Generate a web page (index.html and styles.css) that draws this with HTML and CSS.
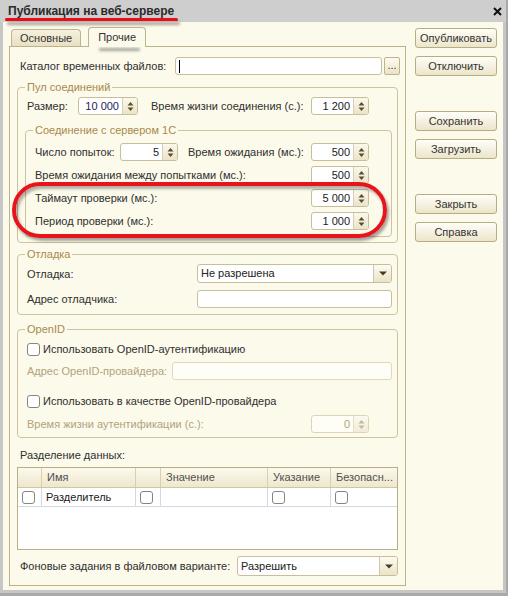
FILE: index.html
```html
<!DOCTYPE html>
<html lang="ru">
<head>
<meta charset="utf-8">
<title>Публикация на веб-сервере</title>
<link rel="stylesheet" href="styles.css">
</head>
<body>
<div class="window">
  <div class="titlebar">
    <span class="title">Публикация на веб-сервере</span>
    <svg class="close" width="9" height="9" viewBox="0 0 9 9"><path d="M1 1L8 8M8 1L1 8" stroke="#111" stroke-width="2"/></svg>
  </div>
  <div class="body">
    <div class="main">
      <div class="tabs">
        <div class="tab">Основные</div>
        <div class="tab active">Прочие</div>
      </div>
      <div class="panel">
        <div class="row catalog">
          <span class="lbl w155">Каталог временных файлов:</span>
          <div class="input grow"><span class="caret"></span></div>
          <div class="dots">...</div>
        </div>

        <fieldset class="group pool">
          <legend>Пул соединений</legend>
          <div class="row">
            <span class="lbl w51">Размер:</span>
            <div class="spin w60"><span class="val focus">10 000</span><span class="arrows"><svg width="7" height="11" viewBox="0 0 7 11"><path d="M0.5 4.5L3.5 1L6.5 4.5Z M0.5 6.5L3.5 10L6.5 6.5Z" fill="#5c4e2a"/></svg></span></div>
            <span class="lbl w160 ml13">Время жизни соединения (с.):</span>
            <div class="spin"><span class="val">1 200</span><span class="arrows"><svg width="7" height="11" viewBox="0 0 7 11"><path d="M0.5 4.5L3.5 1L6.5 4.5Z M0.5 6.5L3.5 10L6.5 6.5Z" fill="#5c4e2a"/></svg></span></div>
          </div>

          <fieldset class="group inner">
            <legend>Соединение с сервером 1С</legend>
            <div class="rows">
              <div class="row">
                <span class="lbl w85">Число попыток:</span>
                <div class="spin"><span class="val">5</span><span class="arrows"><svg width="7" height="11" viewBox="0 0 7 11"><path d="M0.5 4.5L3.5 1L6.5 4.5Z M0.5 6.5L3.5 10L6.5 6.5Z" fill="#5c4e2a"/></svg></span></div>
                <span class="lbl w123 ml10">Время ожидания (мс.):</span>
                <div class="spin"><span class="val">500</span><span class="arrows"><svg width="7" height="11" viewBox="0 0 7 11"><path d="M0.5 4.5L3.5 1L6.5 4.5Z M0.5 6.5L3.5 10L6.5 6.5Z" fill="#5c4e2a"/></svg></span></div>
              </div>
              <div class="row">
                <span class="lbl w276">Время ожидания между попытками (мс.):</span>
                <div class="spin"><span class="val">500</span><span class="arrows"><svg width="7" height="11" viewBox="0 0 7 11"><path d="M0.5 4.5L3.5 1L6.5 4.5Z M0.5 6.5L3.5 10L6.5 6.5Z" fill="#5c4e2a"/></svg></span></div>
              </div>
              <div class="row">
                <span class="lbl w276">Таймаут проверки (мс.):</span>
                <div class="spin"><span class="val">5 000</span><span class="arrows"><svg width="7" height="11" viewBox="0 0 7 11"><path d="M0.5 4.5L3.5 1L6.5 4.5Z M0.5 6.5L3.5 10L6.5 6.5Z" fill="#5c4e2a"/></svg></span></div>
              </div>
              <div class="row">
                <span class="lbl w276">Период проверки (мс.):</span>
                <div class="spin"><span class="val">1 000</span><span class="arrows"><svg width="7" height="11" viewBox="0 0 7 11"><path d="M0.5 4.5L3.5 1L6.5 4.5Z M0.5 6.5L3.5 10L6.5 6.5Z" fill="#5c4e2a"/></svg></span></div>
              </div>
            </div>
          </fieldset>
        </fieldset>

        <fieldset class="group debug">
          <legend>Отладка</legend>
          <div class="row sel">
            <span class="lbl w170">Отладка:</span>
            <div class="select w195"><span class="txt">Не разрешена</span><span class="dd"><svg width="8" height="5" viewBox="0 0 8 5"><path d="M0 0.5H8L4 4.5Z" fill="#4b3d1b"/></svg></span></div>
          </div>
          <div class="row gap7">
            <span class="lbl w170">Адрес отладчика:</span>
            <div class="input w195"></div>
          </div>
        </fieldset>

        <fieldset class="group openid">
          <legend>OpenID</legend>
          <div class="row">
            <span class="check"></span><span class="lbl">Использовать OpenID-аутентификацию</span>
          </div>
          <div class="row gap4">
            <span class="lbl w145 dis">Адрес OpenID-провайдера:</span>
            <div class="input dis w220"></div>
          </div>
          <div class="row gap12">
            <span class="check"></span><span class="lbl">Использовать в качестве OpenID-провайдера</span>
          </div>
          <div class="row gap5">
            <span class="lbl w284 dis">Время жизни аутентификации (с.):</span>
            <div class="spin dis"><span class="val">0</span><span class="arrows"><svg width="7" height="11" viewBox="0 0 7 11"><path d="M0.5 4.5L3.5 1L6.5 4.5Z M0.5 6.5L3.5 10L6.5 6.5Z" fill="#c2b999"/></svg></span></div>
          </div>
        </fieldset>

        <div class="section-label">Разделение данных:</div>
        <div class="table">
          <div class="grid thead">
            <span class="cell"></span>
            <span class="cell">Имя</span>
            <span class="cell"></span>
            <span class="cell">Значение</span>
            <span class="cell">Указание</span>
            <span class="cell last">Безопасн...</span>
          </div>
          <div class="grid trow">
            <span class="cell"><span class="check"></span></span>
            <span class="cell">Разделитель</span>
            <span class="cell"><span class="check"></span></span>
            <span class="cell"></span>
            <span class="cell"><span class="check"></span></span>
            <span class="cell last"><span class="check"></span></span>
          </div>
        </div>

        <div class="row bgjobs">
          <span class="lbl w217">Фоновые задания в файловом варианте:</span>
          <div class="select grow tall"><span class="txt">Разрешить</span><span class="dd"><svg width="8" height="5" viewBox="0 0 8 5"><path d="M0 0.5H8L4 4.5Z" fill="#4b3d1b"/></svg></span></div>
        </div>
      </div>
    </div>

    <div class="side">
      <div class="btn">Опубликовать</div>
      <div class="btn">Отключить</div>
      <div class="btn sep">Сохранить</div>
      <div class="btn">Загрузить</div>
      <div class="btn sep">Закрыть</div>
      <div class="btn">Справка</div>
    </div>
  </div>

  <div class="mark mark-title"></div>
  <div class="mark mark-tab"></div>
  <div class="oval"></div>
</div>
</body>
</html>
```

FILE: styles.css
```css
* { box-sizing: border-box; }
html, body { margin: 0; padding: 0; }
body {
  width: 508px;
  height: 596px;
  overflow: hidden;
  font-family: "Liberation Sans", Arial, sans-serif;
  font-size: 11px;
  color: #2f2f2f;
  background: #c6c6c6;
}
.window {
  position: relative;
  width: 508px;
  height: 596px;
  background: #c6c6c6;
  border-right: 2px solid #a9a9a9;
  border-bottom: 3px solid #a9a9a9;
  display: flex;
  flex-direction: column;
}
.titlebar {
  flex: 0 0 22px;
  height: 22px;
  background: #cecece;
  display: flex;
  align-items: center;
  justify-content: space-between;
  padding: 0 4px 0 8px;
}
.title { font-weight: bold; font-size: 12px; color: #2a2a2a; }
.close { display: block; margin-top: 1px; }

.body {
  flex: 1;
  margin: 0 3px 3px 3px;
  background: #fcfaeb;
  display: flex;
  padding: 5px 0 4px 6px;
}
.main { width: 397px; display: flex; flex-direction: column; }
.tabs {
  display: flex;
  align-items: flex-end;
  height: 19px;
  padding-left: 2px;
  gap: 7px;
  position: relative;
  z-index: 1;
}
.tab {
  height: 17px;
  border: 1px solid #bfb48c;
  border-bottom: none;
  border-radius: 4px 4px 0 0;
  background: linear-gradient(#f6f1de, #e8e0c3);
  padding: 0 8px;
  line-height: 16px;
  color: #333;
}
.tab.active {
  height: 20px;
  margin-bottom: -1px;
  line-height: 19px;
  background: #fcfaeb;
  padding: 0 9px;
}
.panel {
  flex: 1;
  border: 1px solid #bdb28a;
  background: #fcfaeb;
  padding: 10px 7px 0 7px;
  display: flex;
  flex-direction: column;
}

.row { display: flex; align-items: center; height: 18px; flex: 0 0 auto; }
.lbl { white-space: nowrap; flex: 0 0 auto; }
.grow { flex: 1; }
.w51 { width: 51px; } .w85 { width: 85px; } .w123 { width: 123px; }
.w145 { width: 145px; } .w155 { width: 155px; } .w160 { width: 160px; }
.w170 { width: 170px; } .w217 { width: 217px; } .w276 { width: 276px; }
.w284 { width: 284px; }
.w195 { width: 195px; flex: 0 0 195px; }
.w220 { width: 220px; flex: 0 0 220px; }
.ml10 { margin-left: 10px; } .ml13 { margin-left: 13px; }
.gap4 { margin-top: 4px; } .gap5 { margin-top: 5px; }
.gap7 { margin-top: 7px; } .gap12 { margin-top: 12px; }
.dis { color: #b3a27c; }

.catalog { padding-left: 3px; margin-right: -2px; }
.input {
  height: 18px;
  border: 1px solid #c8be9a;
  border-radius: 3px;
  background: #fff;
  display: flex;
  align-items: center;
}
.input.dis { background: #fefdf6; border-color: #e0d9c0; }
.caret { width: 1px; height: 13px; background: #000; margin-left: 3px; }
.dots {
  width: 16px;
  height: 18px;
  margin-left: 2px;
  border: 1px solid #bfb48c;
  border-radius: 2px;
  background: linear-gradient(#fdfbf1, #ebe3c7);
  text-align: center;
  line-height: 14px;
  font-size: 11px;
  color: #333;
}

fieldset.group {
  margin: 0;
  padding: 0;
  min-width: 0;
  border: 1px solid #cdc3a0;
  border-radius: 4px;
}
fieldset.group legend {
  margin-left: 7px;
  padding: 0 2px;
  line-height: 14px;
  font-size: 11px;
  color: #a8894c;
}
.pool { margin-top: 5px !important; padding: 3px 0 5px 0 !important; }
.pool > .row { padding-left: 9px; }
.inner { margin: 8px 5px 0 7px !important; padding: 6px 0 6px 0 !important; }
.rows { display: flex; flex-direction: column; gap: 5px; }
.inner .row { padding-left: 9px; }
.debug { margin-top: 4px !important; padding: 3px 0 6px 0 !important; }
.debug .row { padding-left: 9px; }
.row.sel { height: 19px; }
.openid { margin-top: 7px !important; padding: 4px 0 4px 0 !important; }
.openid .row { padding-left: 9px; }

.spin {
  display: flex;
  width: 58px;
  flex: 0 0 58px;
  height: 18px;
  border: 1px solid #c8be9a;
  border-radius: 3px;
  background: #fff;
  overflow: hidden;
}
.spin.w60 { width: 60px; flex-basis: 60px; }
.spin .val { flex: 1; text-align: right; padding-right: 3px; line-height: 16px; color: #222; }
.spin .val.focus { color: #1f1f5e; }
.spin .arrows {
  width: 15px;
  border-left: 1px solid #d8d0b2;
  background: linear-gradient(#fbf8ec, #ebe4ca);
  display: flex;
  align-items: center;
  justify-content: center;
}
.spin.dis { border-color: #ddd5b8; background: #fefdf6; }
.spin.dis .val { color: #b3a27c; }
.spin.dis .arrows { border-left-color: #e6dfc8; background: linear-gradient(#fbf9f0, #f0ebd9); }

.select {
  display: flex;
  height: 19px;
  border: 1px solid #c8be9a;
  border-radius: 3px;
  background: #fff;
  overflow: hidden;
}
.select.tall { height: 20px; }
.select .txt { flex: 1; padding-left: 3px; line-height: 17px; color: #222; white-space: nowrap; }
.select.tall .txt { line-height: 18px; }
.select .dd {
  width: 18px;
  border-left: 1px solid #d0c7a6;
  background: linear-gradient(#fdfbf2, #ebe3c8);
  display: flex;
  align-items: center;
  justify-content: center;
}

.check {
  display: inline-block;
  width: 13px;
  height: 13px;
  flex: 0 0 13px;
  border: 1px solid #86867c;
  border-radius: 3px;
  background: #fff;
  margin-right: 3px;
}

.section-label { margin-top: 10px; padding-left: 3px; line-height: 14px; height: 14px; }
.table {
  margin-top: 5px;
  height: 83px;
  flex: 0 0 83px;
  border: 1px solid #b9ae86;
  background: #fff;
}
.grid { display: grid; grid-template-columns: 24px 94px 25px 107px 63px 66px; }
.thead {
  height: 20px;
  background: linear-gradient(#fcf9ec, #eee7cd);
  border-bottom: 1px solid #cfc6a2;
  color: #4f4f4f;
}
.thead .cell { border-right: 1px solid #d8cfad; padding-left: 5px; line-height: 19px; white-space: nowrap; overflow: hidden; }
.trow { height: 19px; border-bottom: 1px solid #d3d9e3; }
.trow .cell {
  border-right: 1px solid #d3d9e3;
  padding-left: 4px;
  display: flex;
  align-items: center;
  color: #222;
}
.cell.last { border-right: none !important; }

.bgjobs { margin-top: 6px; height: 20px; padding-left: 3px; }

.side {
  width: 82px;
  margin-left: 9px;
  padding-top: 1px;
  display: flex;
  flex-direction: column;
  gap: 8px;
}
.btn {
  height: 20px;
  border: 1px solid #b7ac84;
  border-radius: 3px;
  background: linear-gradient(#fffef8, #ece5ca);
  text-align: center;
  line-height: 18px;
  color: #333;
  white-space: nowrap;
}
.btn.sep { margin-top: 27px; }

.mark {
  position: absolute;
  height: 3px;
  background: #ec0b16;
  border-radius: 2px;
  box-shadow: 2px 4px 3px rgba(0, 0, 0, 0.35);
}
.mark-title { left: 5px; top: 18px; width: 173px; }
.mark-tab { left: 97px; top: 44px; width: 41px; }
.oval {
  position: absolute;
  left: 12px;
  top: 182px;
  width: 375px;
  height: 56px;
  border: 4px solid #e8141b;
  border-radius: 28px;
  box-shadow: 2px 3px 3px rgba(0, 0, 0, 0.35), inset 2px 3px 3px rgba(0, 0, 0, 0.3);
}
```
